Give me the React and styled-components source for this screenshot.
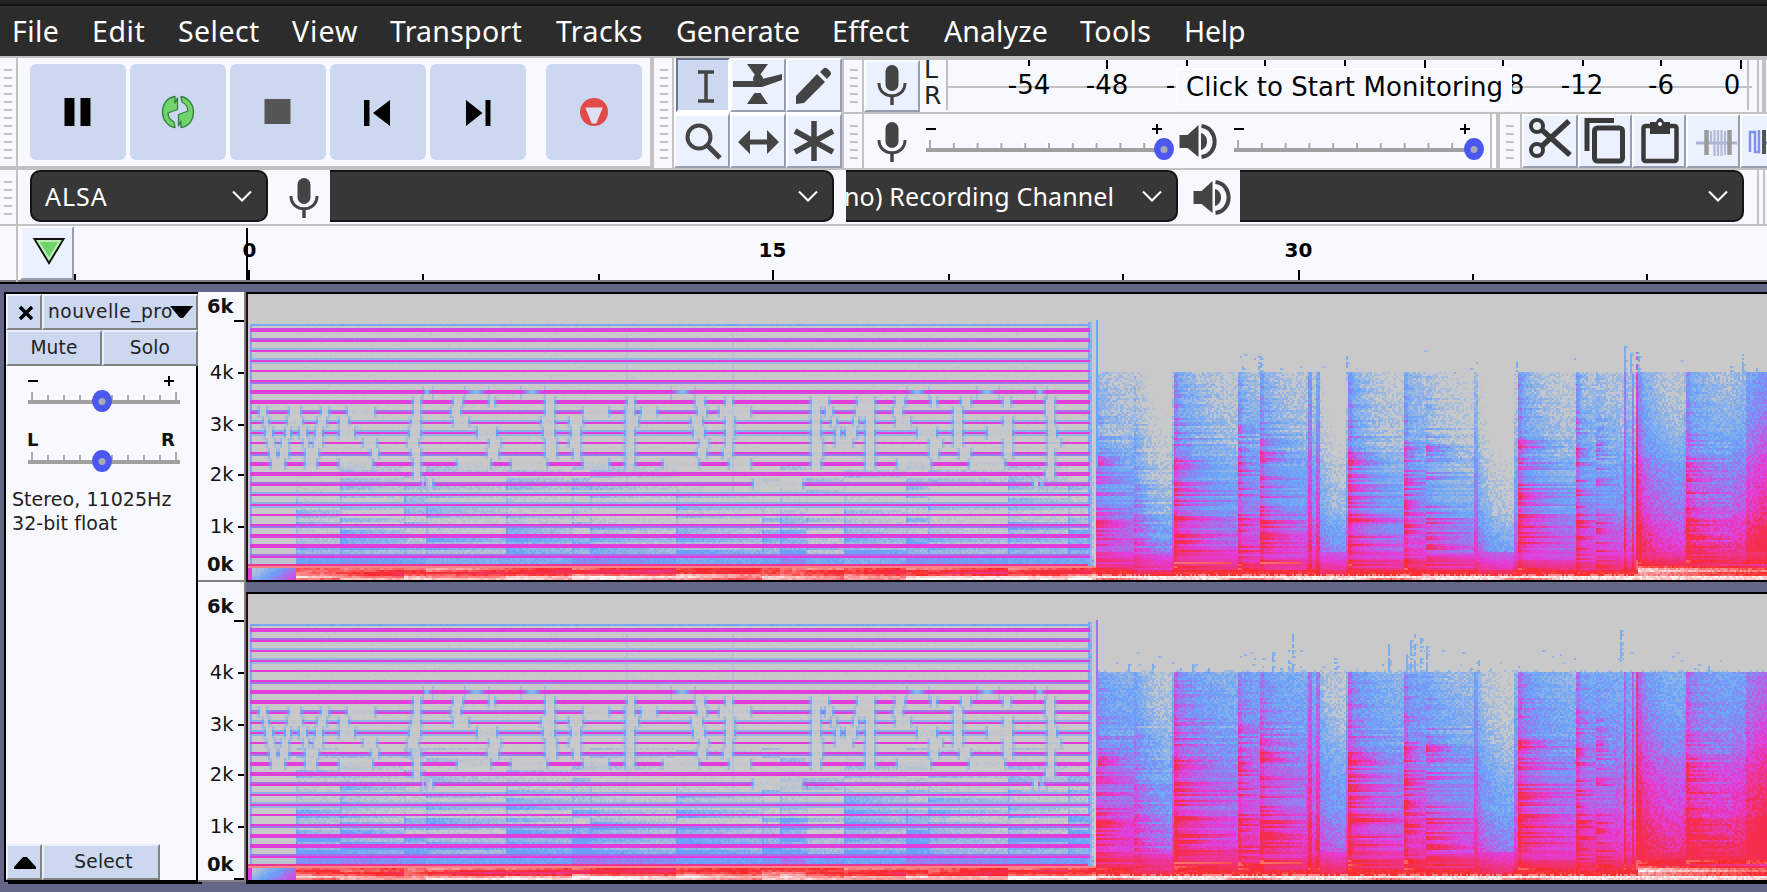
import React, { useLayoutEffect, useRef } from 'react';
import styled, { createGlobalStyle, css } from 'styled-components';

const C = {
  panel: '#f8f9ff', line: '#c2c2c2', button: '#ccd8f0', tool: '#ebf1ff',
  shade: '#989eb0', ink: '#444', dark: '#373737', track: '#646688',
};

const Global = createGlobalStyle`
  * { box-sizing: border-box; }
  html, body { margin: 0; height: 892px; overflow: hidden; background: ${C.track}; }
  svg, canvas { display: block; flex: none; }
`;

const Window = styled.div`
  width: 1767px; height: 892px; overflow: hidden;
  display: flex; flex-direction: column;
  font-family: "DejaVu Sans", sans-serif; color: #111; background: ${C.panel};
`;

/* ---------- menu ---------- */
const MenuBar = styled.nav`
  height: 58px; flex: none; display: flex; padding: 6px 0 0 12px;
  background: linear-gradient(#222 0 4px, #131313 4px 6px, #2c2c2c 6px 56px, ${C.line} 56px);
`;
const MenuItem = styled.span`
  width: ${p => p.$w}px; flex: none; white-space: nowrap;
  font: 28.5px/50px "Noto Sans", sans-serif; letter-spacing: ${p => p.$ls || 0}px; color: #fff;
`;

/* ---------- toolbars ---------- */
const Dock = styled.div`height: 112px; flex: none; display: flex; border-bottom: 2px solid ${C.line};`;
const Bar = styled.div`
  display: flex; flex: none; height: ${p => p.$h}px;
  ${p => p.$thick && css`border-bottom: 2px solid ${C.line};`}
`;
const Rule = styled.div`width: ${p => p.$w || 2}px; align-self: stretch; flex: none; background: ${p => p.$white ? '#fff' : C.line};`;
const HRule = styled.div`height: 2px; flex: none; background: ${C.line};`;
const GripBox = styled.div`
  width: ${p => p.$w || 18}px; align-self: stretch; flex: none; border-right: 2px solid ${C.line};
  padding: ${p => p.$top}px 0 0 ${p => p.$left || 6}px;
`;
const Dashes = styled.div`
  width: 8px; height: ${p => p.$n * 8 - 6}px;
  background: repeating-linear-gradient(${C.line} 0 2px, transparent 2px 8px);
`;
const Grip = ({ n, top, left, w }) => <GripBox $top={top} $left={left} $w={w}><Dashes $n={n} /></GripBox>;

const Transport = styled.div`display: flex; gap: 4px; padding: 6px 8px 0 12px; width: 632px;`;
const TransportButton = styled.div`
  width: 96px; height: 96px; border-radius: 6px; background: ${C.button};
  margin-left: ${p => p.$apart ? 16 : 0}px;
`;
const Tools = styled.div`display: grid; grid-template-columns: repeat(3, 56px); grid-template-rows: 54px 56px;`;
const ToolButton = styled.div`
  background: ${C.tool}; overflow: hidden; flex: none;
  width: ${p => p.$w || 56}px;
  border: solid #fff; border-width: ${p => p.$top || 2}px 2px 2px;
  border-right-color: ${C.shade}; border-bottom-color: ${C.shade};
  ${p => p.$on && css`
    width: 54px; margin-left: 2px;
    background: ${C.button}; border-color: #6b7391 #fff #fff #6b7391;
    & > svg { margin-left: -2px; }
  `}
`;
const RightGroup = styled.div`flex: 1; min-width: 0; display: flex; flex-direction: column; overflow: hidden;`;
const Channels = styled.div`
  width: 26px; padding-left: 4px; overflow: hidden; height: 52px; flex: none;
  font-size: 25px; line-height: 26px; color: #222;
  & > span { display: block; margin-top: -3px; height: 29px; }
`;
const MeterRow = styled.div`height: 54px; display: flex; border-top: 2px solid ${C.line}; flex: none;`;
const MixerRow = styled.div`height: 54px; display: flex; flex: none;`;
const MeterBox = styled.div`position: relative; width: 821px; height: 52px; flex: none;`;
const MonitorHint = styled.div`
  position: absolute; left: 230px; top: 8px; width: 336px; height: 38px;
  border: 2px solid #fff; background: ${C.panel}; color: #000; white-space: nowrap; padding-left: 8px;
  font-size: 26px; line-height: 34px; font-family: "DejaVu Sans", sans-serif;
  letter-spacing: ${p => p.$ls}px;
`;

/* ---------- device row ---------- */
const DeviceRow = styled.div`height: 56px; flex: none; display: flex; border-bottom: 2px solid ${C.line};`;
const Combo = styled.div`
  height: 52px; width: ${p => p.$w}px; flex: none; overflow: hidden;
  display: flex; align-items: center; justify-content: space-between;
  background: ${C.dark}; border: 2px solid #141414; color: #fff;
  border-radius: ${p => p.$cut ? '0 10px 10px 0' : '10px'};
  ${p => p.$cut && css`border-left: 0;`}
  padding: 0 ${p => p.$pr || 14}px 0 ${p => p.$pl ?? 13}px;
  margin-left: ${p => p.$ml || 0}px;
  font: 25px/48px "Noto Sans", sans-serif; white-space: nowrap;
  letter-spacing: ${p => p.$ls || 0}px;
`;
const ComboText = styled.span`margin-left: ${p => p.$shift || 0}px; padding-bottom: 1px;`;
const IconSlot = styled.div`width: ${p => p.$w}px; flex: none;`;

/* ---------- timeline ---------- */
const Timeline = styled.div`
  height: 58px; flex: none; display: flex;
  border-bottom: 2px solid #000; box-shadow: inset 0 -2px #7c7c7c;
`;
const PinButton = styled.div`
  width: 54px; height: 54px; margin-left: 2px; background: ${C.tool};
  border: solid #fff; border-width: 2px; border-right-color: ${C.shade}; border-bottom-color: ${C.shade};
`;

/* ---------- track ---------- */
const TrackArea = styled.div`flex: 1; background: ${C.track}; padding: 8px 0 0 4px; display: flex; min-height: 0;`;
const Panel = styled.div`
  width: 194px; height: 590px; flex: none; border: 2px solid #000;
  background: ${C.panel}; display: flex; flex-direction: column;
  box-shadow: 4px 2px 0 #000;
`;
const PanelRow = styled.div`display: flex; height: ${p => p.$h}px; flex: none; margin-right: ${p => p.$over ? -2 : 0}px;`;
const PanelButton = styled.div`
  width: ${p => p.$w}px; flex: none; background: ${C.button}; overflow: hidden;
  border: 2px solid #e9effb; border-right-color: #828282; border-bottom-color: #828282;
  display: flex; align-items: center; justify-content: ${p => p.$start ? 'flex-start' : 'center'};
  font-size: 18.6px; letter-spacing: ${p => p.$ls ?? 0.15}px; color: #222;
  padding: 0 0 ${p => p.$pb || 0}px ${p => p.$pl || 0}px; white-space: nowrap;
  ${p => p.$start && css`position: relative;`}
`;
const MenuArrow = styled.svg`position: absolute; right: 3px; top: 10px;`;
const Info = styled.div`padding: 1px 0 0 6px; font-size: 19px; line-height: 24px; letter-spacing: 0.05px; color: #222;`;
const Spacer = styled.div`flex: 1;`;
const Rulers = styled.div`width: 48px; flex: none; height: 590px; background: ${C.panel}; overflow: hidden; position: relative;`;
const ChannelStack = styled.div`flex: 1; min-width: 0; display: flex; flex-direction: column; gap: 10px;`;
const ChannelView = styled.div`
  height: 290px; flex: none; border: 2px solid #000; border-right: 0; border-left-color: #2a0a0a; overflow: hidden;
  &:last-child { box-shadow: 0 2px 0 #000; }
`;
const Plot = styled.canvas`width: 1520px; height: 286px; image-rendering: pixelated;`;

/* ---------- icons ---------- */
const I = C.ink;
const Mic = ({ x = 0, y = 0 }) => (
  <g transform={`translate(${x} ${y})`}>
    <rect x="8" y="0" width="13" height="26" rx="6.5" fill={I} />
    <path d="M1.5 18 C1.5 35 27.500 35 27.500 18" fill="none" stroke={I} strokeWidth="3" />
    <path d="M14.500 30V40" stroke={I} strokeWidth="3.500" />
  </g>
);
const Speaker = ({ x = 0, y = 0 }) => (
  <g transform={`translate(${x} ${y})`}>
    <path d="M0 11H8L19 1V33L8 24H0Z" fill={I} />
    <path d="M21.500 9C29.500 11 29.500 24 21.500 26Z" fill={I} />
    <path d="M22 2C39.500 4 39.500 31 22 33" fill="none" stroke={I} strokeWidth="4" />
  </g>
);
const tb = {
  pause: <path d="M34.500 34h10v28h-10zM50.500 34h10v28h-10z" fill="#000" />,
  loop: (
    <g fill="#6fd46c" stroke="#37803a" strokeWidth="1.300" strokeLinejoin="round">
      <path d="M45 32.500C36 34 32.500 41 32.500 48C32.500 55 37 62 45 63.500L44 58C40 56 38 53 38 49L47.500 45.500V34L45 39Z" />
      <path d="M51 63.500C60 62 63.500 55 63.500 48C63.500 41 59 34 51 32.500L52 38C56 40 58 43 58 47L48.500 50.500V62L51 57Z" />
    </g>
  ),
  stop: <rect x="34.500" y="35" width="26" height="25" fill="#555" />,
  prev: <path d="M34 36h5.500v26H34zM60 36v26L43 49z" fill="#000" />,
  next: <path d="M36 36v26L52.500 49zM55.500 36h5v26h-5z" fill="#000" />,
  record: <g><circle cx="48" cy="48" r="14" fill="#e24a4a" /><path d="M38.500 43H57.500L50.500 60H45.500Z" fill="#dfe0f2" stroke="#e24a4a" /></g>,
};
const TIcon = ({ k }) => <svg width="96" height="96">{tb[k]}</svg>;

const tools = [
  <path d="M22 12H38M22 41H38M30 12V41" stroke={I} strokeWidth="3.500" fill="none" />,
  <g fill={I}><path d="M15 4H36L28 15H23Z" /><circle cx="26" cy="19" r="5" /><path d="M1 21H22L50 14V20L30 27H1Z" /><path d="M15 44L22.500 33H28.500L36 44Z" /></g>,
  <g fill={I}><path d="M8 44V36L29 14L37 22L16 43Z" /><path d="M32 12L36 8Q38 7 41 10Q44 13 42.500 15L39 19Z" /></g>,
  <g stroke={I} strokeWidth="4" fill="none"><circle cx="23" cy="21" r="11.500" /><path d="M31 29L44 42" strokeWidth="5" /></g>,
  <g fill={I}><path d="M6 26L18 14V23.500H35V14L47 26L35 38V28.500H18V38Z" /></g>,
  <path d="M26 5V45M7 15L45 36M7 36L45 15" stroke={I} strokeWidth="5.500" />,
];

const E = '#3a3a3a';
const edits = [
  <g fill="none" stroke={E} strokeWidth="4"><circle cx="13" cy="10" r="6" /><circle cx="13" cy="34" r="6" /><path d="M18 14L46 39M18 30L45 5" strokeWidth="5.500" /></g>,
  <g fill="none" stroke={E} strokeWidth="5"><path d="M7 35V4.500H34" /><rect x="14.500" y="12" width="28" height="33" rx="3" /></g>,
  <g><rect x="9.500" y="10" width="33" height="35" rx="2" fill="none" stroke={E} strokeWidth="4.500" /><path d="M16 18V6H22Q26 -2 30 6H36V18Z" fill={E} /><circle cx="26" cy="8" r="2" fill="#fff" /></g>,
  <g fill="none"><path d="M8 27H49" stroke="#a9b2d0" strokeWidth="3" /><path d="M23 27V15M26.500 14V40M30 14V40M33.500 14V40M37 15V39" stroke="#b3bbd6" strokeWidth="2.200" /><path d="M18.500 14V39M41.500 14V39" stroke="#9a9a9a" strokeWidth="4.500" /></g>,
  <g fill="none"><path d="M8 36V16h5V36h4V14" stroke="#7f92e8" strokeWidth="2.500" /><path d="M22 14V38" stroke="#555" strokeWidth="4" /><path d="M24 27H34" stroke="#7f92e8" strokeWidth="3" /></g>,
];

const Chevron = () => (
  <svg width="20" height="12"><path d="M1 1.500L10 10.500L19 1.500" fill="none" stroke="#fff" strokeWidth="2" /></svg>
);

function Slider({ width, height, x0, len, tickGap, ticks, thumb, y, left = '−', right = '+', bold }) {
  const label = { fontSize: 18, fontWeight: 'bold', fill: '#111' };
  return (
    <svg width={width} height={height}>
      {Array.from({ length: ticks }, (_, i) => {
        const end = i === 0 || (bold !== undefined && i === ticks - 1);
        const tx = x0 + 3 + i * tickGap;
        return <g key={i}><rect x={tx - 2} y={y - (end ? 10 : 6)} width="2" height={end ? 9 : 5} fill="#fff" /><rect x={tx} y={y - (end ? 8 : 5)} width="2" height={end ? 8 : 5} fill="#aaa" /></g>;
      })}
      <rect x={x0} y={y} width={len} height="4" fill="#a0a0a0" />
      {bold ? (
        <g {...label}><text x={x0 - 1} y={y - 14}>{left}</text><text x={x0 + len - 19} y={y - 14}>{right}</text></g>
      ) : (
        <path d={`M${x0} ${y - 19}h10M${x0 + len - (bold === false ? 16 : 20)} ${y - 19}h10m-5 -5v10`} stroke="#000" strokeWidth="2" />
      )}
      <ellipse cx={thumb} cy={y + 1} rx="10" ry="11" fill="#4b57ee" />
      <circle cx={thumb} cy={y + 1.500} r="3.500" fill="#a9a9b6" />
    </svg>
  );
}

function MeterScale() {
  const ticks = [[82, 6], [160, 9], [240, 6], [318, 6], [398, 6], [478, 9], [556, 6], [636, 6], [714, 6], [794, 9]];
  const labels = [['-54', 83], ['-48', 161], ['-42', 241], ['-18', 557], ['-12', 636], ['-6', 715], ['0', 786]];
  return (
    <svg width="821" height="52">
      <path d="M1 0V50M0 27H806M802 0V50M812 0V52" stroke={C.line} strokeWidth="2" />
      <rect x="816" y="0" width="4" height="52" fill={C.line} />
      {ticks.map(([x, h]) => <rect key={x} x={x} y="0" width="2" height={h} fill="#000" />)}
      <g fontSize="26" textAnchor="middle" fill="#000">
        {labels.map(([t, x]) => <text key={t} x={x} y="34">{t}</text>)}
      </g>
    </svg>
  );
}

function TimeScale() {
  const at = [348, 524, 698, 874, 1048, 1224, 1398, 1572];
  return (
    <svg width="1692" height="54">
      <rect x="0" y="48" width="2" height="6" />
      <rect x="172" y="2" width="2" height="52" />
      <rect x="174" y="44" width="2" height="10" />
      {at.map(x => {
        const major = x === 698 || x === 1224;
        return <rect key={x} x={x} y={major ? 44 : 48} width="2" height={major ? 10 : 6} />;
      })}
      <g fontSize="20" fontWeight="bold" textAnchor="middle">
        <text x="175.500" y="31">0</text><text x="698.500" y="31">15</text><text x="1224.500" y="31">30</text>
      </g>
    </svg>
  );
}

function FreqRuler({ last }) {
  const rows = [['6k', 21, 29, 12, 1], ['4k', 87, 81, 8], ['3k', 139, 133, 8], ['2k', 189, 183, 8], ['1k', 241, 235, 8], ['0k', 279, 287, 12, 1]];
  return (
    <svg width="48" height={last ? 300 : 290}>
      <rect x="0" y={last ? 298 : 288} width="48" height="2" fill="#808080" />
      <g transform={last ? 'translate(0 10)' : undefined}>
        {rows.map(([t, y, ty, w, b]) => (
          <g key={t}>
            <text x="35.500" y={y} textAnchor="end" fontSize="19.500" fontWeight={b ? 'bold' : 'normal'} fill="#111">{t}</text>
            {(t !== '0k' || last) && <rect x={48 - w} y={ty - 1} width={w - 2} height="2" />}
          </g>
        ))}
      </g>
      <rect x="46" y="0" width="2" height={last ? 300 : 290} fill="#808080" />
    </svg>
  );
}

/* ---------- spectrogram ---------- */
const W = 760, H = 143;
const STOPS = [[201, 201, 201], [104, 163, 250], [228, 60, 218], [249, 42, 42], [250, 250, 250]];
const colour = v => {
  const t = Math.max(0, Math.min(0.9999, v)) * 4, i = Math.floor(t), f = t - i;
  return STOPS[i].map((a, k) => a + (STOPS[i + 1][k] - a) * f);
};
const hash = (a, b, s = 0) => {
  let h = (a * 374761393 + b * 668265263 + s * 1274126177) | 0;
  h = Math.imul(h ^ (h >>> 13), 1274126177);
  return ((h ^ (h >>> 16)) >>> 0) / 4294967296;
};
/* tone rows: [row, value] */
const TONES = [
  [15, 0.21], [17, 0.47], [18, 0.5], [22, 0.38], [23, 0.5], [27, 0.13], [28, 0.5], [32, 0.14], [33, 0.5], [34, 0.1],
  [38, 0.5], [43, 0.5], [44, 0.36], [48, 0.5], [49, 0.48], [53, 0.49], [54, 0.5], [58, 0.36], [59, 0.5], [63, 0.15], [64, 0.5],
  [68, 0.17], [69, 0.5], [70, 0.13], [74, 0.5], [79, 0.5], [80, 0.34], [84, 0.49], [85, 0.5], [89, 0.48], [90, 0.5],
  [94, 0.4], [95, 0.5], [99, 0.15], [100, 0.5], [104, 0.15], [105, 0.5], [106, 0.14], [110, 0.5], [115, 0.5], [116, 0.35],
  [120, 0.5], [121, 0.48], [125, 0.49], [126, 0.5], [130, 0.38], [131, 0.5],
];
/* interruptions of the tones, per row group */
const GAPS = [
  [53, 54, [[520, 540], [640, 668], [752, 760], [915, 940], [1165, 1180], [1370, 1390], [1455, 1475], [1715, 1765], [1855, 1900], [1965, 1990], [2075, 2088], [2165, 2192], [2290, 2308], [2420, 2440]]],
  [58, 59, [[62, 80], [152, 178], [246, 262], [325, 400], [520, 540], [638, 660], [920, 942], [1030, 1105], [1160, 1183], [1205, 1245], [1375, 1398], [1438, 1530], [1715, 1740], [1757, 1775], [1845, 1900], [1960, 1988], [2140, 2168], [2420, 2440]]],
  [63, 64, [[70, 86], [145, 188], [232, 258], [300, 325], [518, 540], [643, 685], [905, 940], [990, 1025], [1160, 1195], [1355, 1388], [1455, 1480], [1715, 1740], [1775, 1790], [1840, 1855], [1878, 1902], [1965, 2010], [2140, 2168], [2292, 2315], [2423, 2443]]],
  [68, 70, [[78, 94], [140, 152], [180, 195], [226, 248], [302, 340], [512, 537], [715, 768], [910, 940], [998, 1018], [1160, 1183], [1360, 1390], [1455, 1480], [1715, 1740], [1785, 1800], [1820, 1850], [1880, 1902], [2035, 2088], [2140, 2165], [2245, 2315], [2423, 2450]]],
  [74, 74, [[86, 104], [125, 144], [190, 206], [222, 244], [370, 410], [505, 535], [750, 778], [920, 945], [992, 1020], [1160, 1183], [1382, 1405], [1455, 1478], [1715, 1743], [1785, 1835], [1880, 1902], [2070, 2105], [2140, 2168], [2290, 2315], [2425, 2460]]],
  [79, 80, [[92, 110], [120, 142], [195, 235], [395, 415], [515, 537], [745, 775], [920, 950], [1000, 1020], [1160, 1183], [1375, 1398], [1453, 1475], [1715, 1745], [1880, 1902], [2070, 2095], [2160, 2190], [2290, 2315], [2425, 2443]]],
  [84, 85, [[98, 130], [198, 228], [302, 395], [520, 537], [652, 748], [818, 920], [1030, 1103], [1160, 1183], [1272, 1372], [1470, 1530], [1715, 1740], [1880, 1902], [1975, 2070], [2192, 2290], [2423, 2440]]],
  [89, 90, [[522, 540], [2420, 2440]]],
  [94, 95, [[560, 578], [1542, 1688], [2380, 2396]]],
];
const FADES = [[48, 545, 578], [48, 670, 745], [48, 840, 910], [48, 1290, 1362], [48, 1995, 2065], [48, 2205, 2275], [48, 2380, 2415], [94, 540, 560], [94, 2396, 2415]];
const NOTES = [170, 300, 490, 555, 800, 995, 1050, 1308, 1565, 1620, 1700, 1812, 1998, 2064, 2304, 2485, 2556].map(u => Math.round((u - 24) / 6));
/* loudness of each of those notes */
const LOUD = [0.9, 0.9, 0.55, 0.75, 1.1, 0.9, 0.9, 0.95, 0.6, 1.05, 0.3, 1.1, 1, 0.8, 1, 0.95, 0.5];
/* full band part: start, level at onset, level at the end, brightness of the overtones */
const PARTS = [
  [2570, 0.05, -0.03, 1], [2683, 0.03, -0.19, 0.5], [2796, -0.02, -0.02, 0.1], [2802, 0.16, -0.05, 1.1], [2994, 0.1, 0.03, 1.2], [3060, 0.13, -0.03, 1],
  [3198, 0.02, -0.02, 0.1], [3204, 0.15, 0.1, 0.4], [3216, 0.0, -0.03, 0.2], [3225, 0.11, 0.06, 0.3], [3240, -0.08, -0.2, 0.15], [3318, -0.02, -0.02, 0.1], [3324, 0.15, -0.08, 1.1],
  [3492, 0.1, 0.02, 1.2], [3555, 0.02, -0.1, 1.1], [3703, 0.05, 0.05, 0.3], [3712, -0.08, -0.27, 0.2], [3822, -0.03, -0.03, 0.1], [3831, 0.15, -0.07, 1.1],
  [4008, 0.12, 0, 1.3], [4066, 0.05, 0, 1], [4126, 0.02, -0.02, 0.3], [4152, 0.18, 0.18, 0.3], [4158, 0.05, 0, 0.1], [4176, 0.18, 0.17, 0.2],
  [4182, 0.0, 0.0, 0.1], [4188, 0.36, 0.34, 0.1], [4196, 0.17, -0.07, 0.4], [4332, 0.0, 0.0, 0.1], [4338, 0.14, 0, 0.9], [4476, 0.03, 0.04, 0.2], [4519, 0.09, 0.22, 0.4], [4600, 0.2, 0.2, 0],
].map(([u, ...r]) => [Math.round((u - 24) / 6), ...r]);

const PROFILE = [[0, 0.06], [15, 0.1], [35, 0.17], [45, 0.23], [55, 0.27], [66, 0.3], [72, 0.37], [80, 0.43], [88, 0.5], [93, 0.6], [97, 0.68], [100, 0.73]];
const profile = row => {
  const p = Math.max(0, (row - 40) / 1.020);
  for (let i = 1; i < PROFILE.length; i++) {
    if (p <= PROFILE[i][0]) {
      const [a, va] = PROFILE[i - 1], [b, vb] = PROFILE[i];
      return va + (vb - va) * (p - a) / (b - a);
    }
  }
  return 0.75;
};

function synth(ch) {
  const g = new Float32Array(W * H);
  const at = (c, r) => r * W + c;
  const END = 422;
  /* music below the tones */
  for (let c = 1; c < END - 2; c++) {
    let n = -1;
    while (n + 1 < NOTES.length && NOTES[n + 1] <= c) n++;
    const age = n < 0 ? 0 : c - NOTES[n];
    for (let r = 16; r < 136; r++) {
      if (n < 0) { g[at(c, r)] = r > 131 ? 0.03 : 0; continue; }
      const depth = Math.max(0, (r - (ch ? 70 : 80)) / (ch ? 60 : 54));
      const group = hash(n, r >> 2, 6 + ch);
      const band = hash(n, r >> 1, 3 + ch);
      let v = Math.pow(depth, 1.3) * (ch ? 0.23 : 0.17) * LOUD[n] * Math.exp(-age / 50) * (0.4 + 1.1 * group);
      v += band > 0.7 && depth > 0.1 ? 0.1 * Math.exp(-age / 24) : -0.045;
      v += (hash(c, r, ch) - 0.5) * 0.09;
      if (r > 121) v += ch ? 0.08 : 0.06;
      if (age < 1 && r > 95) v += 0.07;
      v = Math.min(v, 0.26);
      if (r > 131) v = 0.22 + (ch ? 0.05 : 0) + 0.14 * (hash(n, 7) - 0.35) * Math.exp(-age / 60) + (hash(c, r, 2) - 0.5) * 0.07;
      if (depth === 0) v = hash(c, r, 9) > 0.9 ? 0.02 : 0;
      g[at(c, r)] = Math.max(0, v);
    }
  }
  for (const [r, v] of TONES) for (let c = 1; c < END; c++) g[at(c, r)] = Math.max(g[at(c, r)], v + (r === 15 ? (hash(c, 1) - 0.5) * 0.05 : 0));
  for (const [r0, r1, list] of GAPS) {
    for (const [u0, u1] of list) {
      const a = Math.round((u0 - 24) / 6), b = Math.round((u1 - 24) / 6);
      for (let r = r0 - 2; r <= r1 + 2; r++) {
        const on = r >= r0 && r <= r1;
        for (let c = a; c < b; c++) {
          if (on) g[at(c, r)] = 0.01 + (hash(c, r, 4) > 0.8 ? 0.03 : 0);
          else g[at(c, r)] *= 0.4;
        }
        for (const [c, s] of [[a - 1, -1], [b, 1]]) {
          g[at(c, r)] = on ? 0.25 : Math.max(g[at(c, r)], 0.13 - 0.05 * hash(c, r));
          const o = at(c + s, r);
          g[o] = on ? Math.min(g[o], 0.42) : Math.max(g[o], 0.04);
        }
      }
    }
  }
  for (const [row, u0, u1] of FADES) {
    const a = Math.round((u0 - 24) / 6), b = Math.round((u1 - 24) / 6);
    for (let c = a; c < b; c++) {
      const k = Math.sin(Math.PI * (c - a + 0.5) / (b - a));
      for (const r of [row, row + 1]) g[at(c, r)] = 0.5 - 0.36 * k * k;
    }
    for (const c of [a, b]) for (let r = row - 2; r < row + 5; r++) if (g[at(c, r)] < 0.2) g[at(c, r)] = 0.1;
  }
  for (let r = 15; r < 136; r++) { g[at(1, r)] = Math.max(g[at(1, r)], 0.21); }
  for (const c of [189, 242]) for (let r = 20; r < 100; r++) if (g[at(c, r)] < 0.05) g[at(c, r)] = 0.05;
  /* low band under the tones */
  for (let c = 0; c < END + 3; c++) {
    let n = 0;
    while (n + 1 < NOTES.length && NOTES[n + 1] <= c) n++;
    const age = c - NOTES[n];
    g[at(c, 135)] = 0.6; g[at(c, 136)] = 0.86;
    for (let r = 137; r < H; r++) {
      if (c < 24) {
        g[at(c, r)] = c < 2 ? 0.5 : Math.min(0.58, c / 26 * 0.42 + (r - 137) * 0.024 + (hash(c, r) - 0.5) * 0.05);
      } else {
        const base = [0.82, 0.77, 0.77, 0.85, 0.97, 0.95][r - 137];
        const drift = 0.05 * Math.sin(c / 37 + r) + 0.1 * (hash(n, r, 2 + ch) - 0.5);
        g[at(c, r)] = base + drift - Math.min(0.06, age / 500) + (hash(c >> 1, r, ch) - 0.5) * 0.06;
      }
    }
  }
  /* end of the tones */
  for (let r = 0; r < 136; r++) {
    for (let c = 420; c < 424; c++) g[at(c, r)] = r > 131 ? 0.26 : 0;
    if (r >= 14) { g[at(420, r)] = 0.21; g[at(421, r)] = 0.1 + 0.1 * hash(3, r); if (r > 90 && hash(1, r) > 0.5) g[at(422, r)] = 0.1; }
    if (r >= 13) g[at(424, r)] = g[at(423, r)] = 0;
  }
  for (const [r, v] of TONES) if (v > 0.3) g[at(420, r)] = v;
  /* full band part */
  PARTS.slice(0, -1).forEach(([start, a0, a1, tone], i) => {
    const end = Math.min(W, PARTS[i + 1][0]);
    const late = start >= 694;
    for (let c = start; c < end; c++) {
      const t = (c - start) / (end - start);
      const amp = end - start < 3 ? a0 : a1 + (a0 - a1) * Math.exp(-t * 2.6);
      for (let r = 20; r < H; r++) {
        let v = profile(r) + (ch ? 0.13 - Math.max(0, r - 100) * 0.002 : 0);
        const noise = hash(c, r, ch + 20) - 0.5;
        const low = Math.max(0, Math.min(1, (r - 38) / 60));
        if (r < 39) {
          v = 0;
          if (ch && r === 38 && noise > 0.25) v = 0.1;
        } else if (r < 138) {
          v += amp * (ch ? 0.85 : 1) * (r > 128 ? 0.35 : 1);
          if (late) v += 0.02 + 0.07 * Math.min(1, Math.max(0, (r - 60) / 45));
          const h1 = hash(i, r, 50);
          if (h1 > 0.66 && tone > 0.4) {
            const life = 0.5 + hash(i, r, 51) * 1.1;
            v += Math.max(0, 1 - t / life) * (0.04 + 0.13 * low) * tone * (r > 128 ? 0.5 : 1) * (0.6 + h1 * 0.5);
          }
          if (h1 < 0.25 && tone > 0.4 && r > 65) v -= 0.055;
          const hump = (m, w, s, k) => s * Math.exp(-((r - m) ** 2) / w) * Math.max(0, 1 - t * k);
          if (tone > 0.9) v += hump(75 + hash(i, 1) * 12, 12, 0.17, 1.4) + hump(113 + (i % 3), 8, 0.1, 0.7);
          if (c - start < 2 && a0 > 0.05) v += 0.05;
          v += noise * (r > 128 ? 0.06 : 0.13) * (tone > 0.9 && r > 85 ? 0.6 : 1);
          if (v < 0.09 && noise < 0) v *= 0.4;
          v = Math.max(0, Math.min(v, r > 132 ? 0.82 : 0.7));
          if (r === 134 && (i === 3 || i === 5) && t < 0.9) v = 0.84 - t * 0.05;
        } else {
          v = [0.73, 0.75, 0.8, 0.98, 0.96][r - 138] + noise * 0.08 + (r < 140 && a1 < -0.15 ? -0.07 : 0);
          if (r === 140) v = noise > 0 ? 0.86 : 0.76;
          if (r === 142) v -= Math.max(0, 0.13 * Math.sin(c / 11));
        }
        if (c >= 695 && r > 134) v = [0.73, 0.82, 0.93, 0.97, 0.88, 0.88, 0.97, 0.95][r - 135] + noise * 0.08 - 0.13 * (c - 695) / 60 * (r < 141 ? 1 : 0);
        g[at(c, r)] = v;
      }
    }
  });
  for (let r = 13; r < 139; r++) g[at(424, r)] = Math.max(ch ? 0.36 : 0.24, r > 86 ? g[at(424, r)] : 0);
  /* transients that reach above the band */
  const spikes = ch
    ? [[522, 18], [520, 26], [440, 35], [452, 34], [472, 35], [480, 36], [583, 20], [586, 22], [589, 26], [581, 23], [579, 30], [570, 25], [544, 36], [543, 32], [615, 33], [686, 18], [512, 28], [730, 36]]
    : [[505, 31], [506, 31], [497, 36], [549, 31], [688, 26], [691, 29], [694, 29], [695, 31], [747, 30], [741, 36], [754, 36], [634, 34]];
  for (const [c, top] of spikes) for (let r = top; r < 40; r++) if (hash(c, r, 77) > (ch ? 0.25 : 0.2)) {
    g[at(c, r)] = c === 694 && !ch ? 0.4 : 0.19;
    if (hash(c, r, 78) > 0.6) g[at(c + 1, r)] = 0.13;
  }
  for (let k = 0; k < (ch ? 60 : 16); k++) {
    const c = 428 + Math.floor(hash(k, 1, 80) * 328), r = 39 - Math.floor(hash(k, 2, 80) ** 2 * 13);
    g[at(c, r)] = 0.06 + hash(k, 3) * 0.14; if (k % 2) g[at(c + 1, r)] = 0.09;
  }
  return g;
}

function Spectrogram({ channel }) {
  const ref = useRef(null);
  useLayoutEffect(() => {
    const ctx = ref.current.getContext('2d');
    const img = ctx.createImageData(W, H);
    synth(channel).forEach((v, i) => {
      const [r, g, b] = colour(v);
      img.data.set([r, g, b, 255], i * 4);
    });
    ctx.putImageData(img, 0, 0);
  }, [channel]);
  return <Plot ref={ref} width={W} height={H} />;
}

const MENU = [['File', 80, 0.45], ['Edit', 86, 0.6], ['Select', 114, 0.45], ['View', 98, 1], ['Transport', 166, 0.25], ['Tracks', 120, 0.45], ['Generate', 156, 0], ['Effect', 112, 0.3], ['Analyze', 136, 0.1], ['Tools', 104, 0.4], ['Help', 80, -0.2]];

export default function App() {
  return (
    <>
      <Global />
      <Window>
        <MenuBar>{MENU.map(([t, w, ls]) => <MenuItem key={t} $w={w} $ls={ls}>{t}</MenuItem>)}</MenuBar>

        <Dock>
          <Bar $h={110} $thick>
            <Grip n={12} top={11} left={4} />
            <Transport>
              {['pause', 'loop', 'stop', 'prev', 'next', 'record'].map(k => (
                <TransportButton key={k} $apart={k === 'record'}><TIcon k={k} /></TransportButton>
              ))}
            </Transport>
          </Bar>
          <Rule $w={4} />
          <Bar $h={110}>
            <Grip n={12} top={11} w={20} />
            <Tools>
              {tools.map((t, i) => (
                <ToolButton key={i} $on={i === 0} $top={i > 2 ? 4 : 2}><svg width="52" height="50">{t}</svg></ToolButton>
              ))}
            </Tools>
          </Bar>
          <Rule />
          <RightGroup>
            <MeterRow>
              <Grip n={5} top={9} w={20} />
              <ToolButton><svg width="52" height="48"><Mic x={11.500} y={3} /></svg></ToolButton>
              <Channels><span>L</span><span>R</span></Channels>
              <MeterBox><MeterScale /><MonitorHint $ls={0.07}>Click to Start Monitoring</MonitorHint></MeterBox>
            </MeterRow>
            <HRule />
            <MixerRow>
              <Grip n={5} top={11} w={20} />
              <IconSlot $w={56}><svg width="56" height="54"><Mic x={13.500} y={8} /></svg></IconSlot>
              <Slider width={258} height={54} x0={6} len={246} tickGap={23.800} ticks={10} thumb={244} y={34} />
              <IconSlot $w={42}><svg width="42" height="54"><Speaker x={1.500} y={10} /></svg></IconSlot>
              <Slider width={270} height={54} x0={14} len={246} tickGap={23.800} ticks={10} thumb={254} y={34} />
              <Rule /><Rule $white /><Rule $white /><Rule $w={4} />
              <Grip n={5} top={11} w={22} />
              {edits.map((t, i) => (
                <ToolButton key={i} $w={i ? 54 : 56}><svg width="52" height="50">{t}</svg></ToolButton>
              ))}
            </MixerRow>
          </RightGroup>
        </Dock>

        <DeviceRow>
          <Grip n={5} top={11} left={4} />
          <Combo $w={238} $ml={12} $ls={1}><ComboText>ALSA</ComboText><Chevron /></Combo>
          <IconSlot $w={62}><svg width="62" height="54"><Mic x={21.500} y={8} /></svg></IconSlot>
          <Combo $w={504} $cut><span /><Chevron /></Combo>
          <Combo $w={332} $cut $ml={12} $pl={0} $ls={0.15}><ComboText $shift={-2}>no) Recording Channel</ComboText><Chevron /></Combo>
          <IconSlot $w={62}><svg width="62" height="54"><Speaker x={15.500} y={10} /></svg></IconSlot>
          <Combo $w={504} $cut><span /><Chevron /></Combo>
          <IconSlot $w={13} /><Rule /><IconSlot $w={4} /><Rule />
        </DeviceRow>

        <Timeline>
          <GripBox $top={0} />
          <PinButton>
            <svg width="51" height="50">
              <path d="M12.500 11H41.500L27 35Z" fill="#70d46c" stroke="#111" strokeWidth="2" />
              <path d="M16 13H38L27 31Z" fill="none" stroke="#b9eeb0" strokeWidth="2" />
            </svg>
          </PinButton>
          <TimeScale />
        </Timeline>

        <TrackArea>
          <Panel>
            <PanelRow $h={36} $over>
              <PanelButton $w={36} $pl={3}>
                <svg width="18" height="16"><path d="M3 3L15 15M15 3L3 15" stroke="#000" strokeWidth="3.500" /></svg>
              </PanelButton>
              <PanelButton $w={156} $start $pb={1} $pl={4} $ls={0.5}>
                nouvelle_pro
                <MenuArrow width="23" height="13"><path d="M0 0H23L13 12H10Z" /></MenuArrow>
              </PanelButton>
            </PanelRow>
            <PanelRow $h={36} $over>
              <PanelButton $w={96} $pb={2}>Mute</PanelButton>
              <PanelButton $w={96} $pb={2}>Solo</PanelButton>
            </PanelRow>
            <Slider width={190} height={60} x0={22} len={152} tickGap={16} ticks={10} thumb={96} y={34} bold={false} />
            <Slider width={190} height={60} x0={22} len={152} tickGap={16} ticks={10} thumb={96} y={34} bold left="L" right="R" />
            <Info>Stereo, 11025Hz<br />32-bit float</Info>
            <Spacer />
            <PanelRow $h={36}>
              <PanelButton $w={36} $pl={2}><svg width="22" height="14"><path d="M0 14H22V12L13 2H9L0 12Z" /></svg></PanelButton>
              <PanelButton $w={118} $pb={2} $pl={5}>Select</PanelButton>
            </PanelRow>
          </Panel>
          <Rulers><FreqRuler /><FreqRuler last /></Rulers>
          <ChannelStack>
            <ChannelView><Spectrogram channel={0} /></ChannelView>
            <ChannelView><Spectrogram channel={1} /></ChannelView>
          </ChannelStack>
        </TrackArea>
      </Window>
    </>
  );
}
